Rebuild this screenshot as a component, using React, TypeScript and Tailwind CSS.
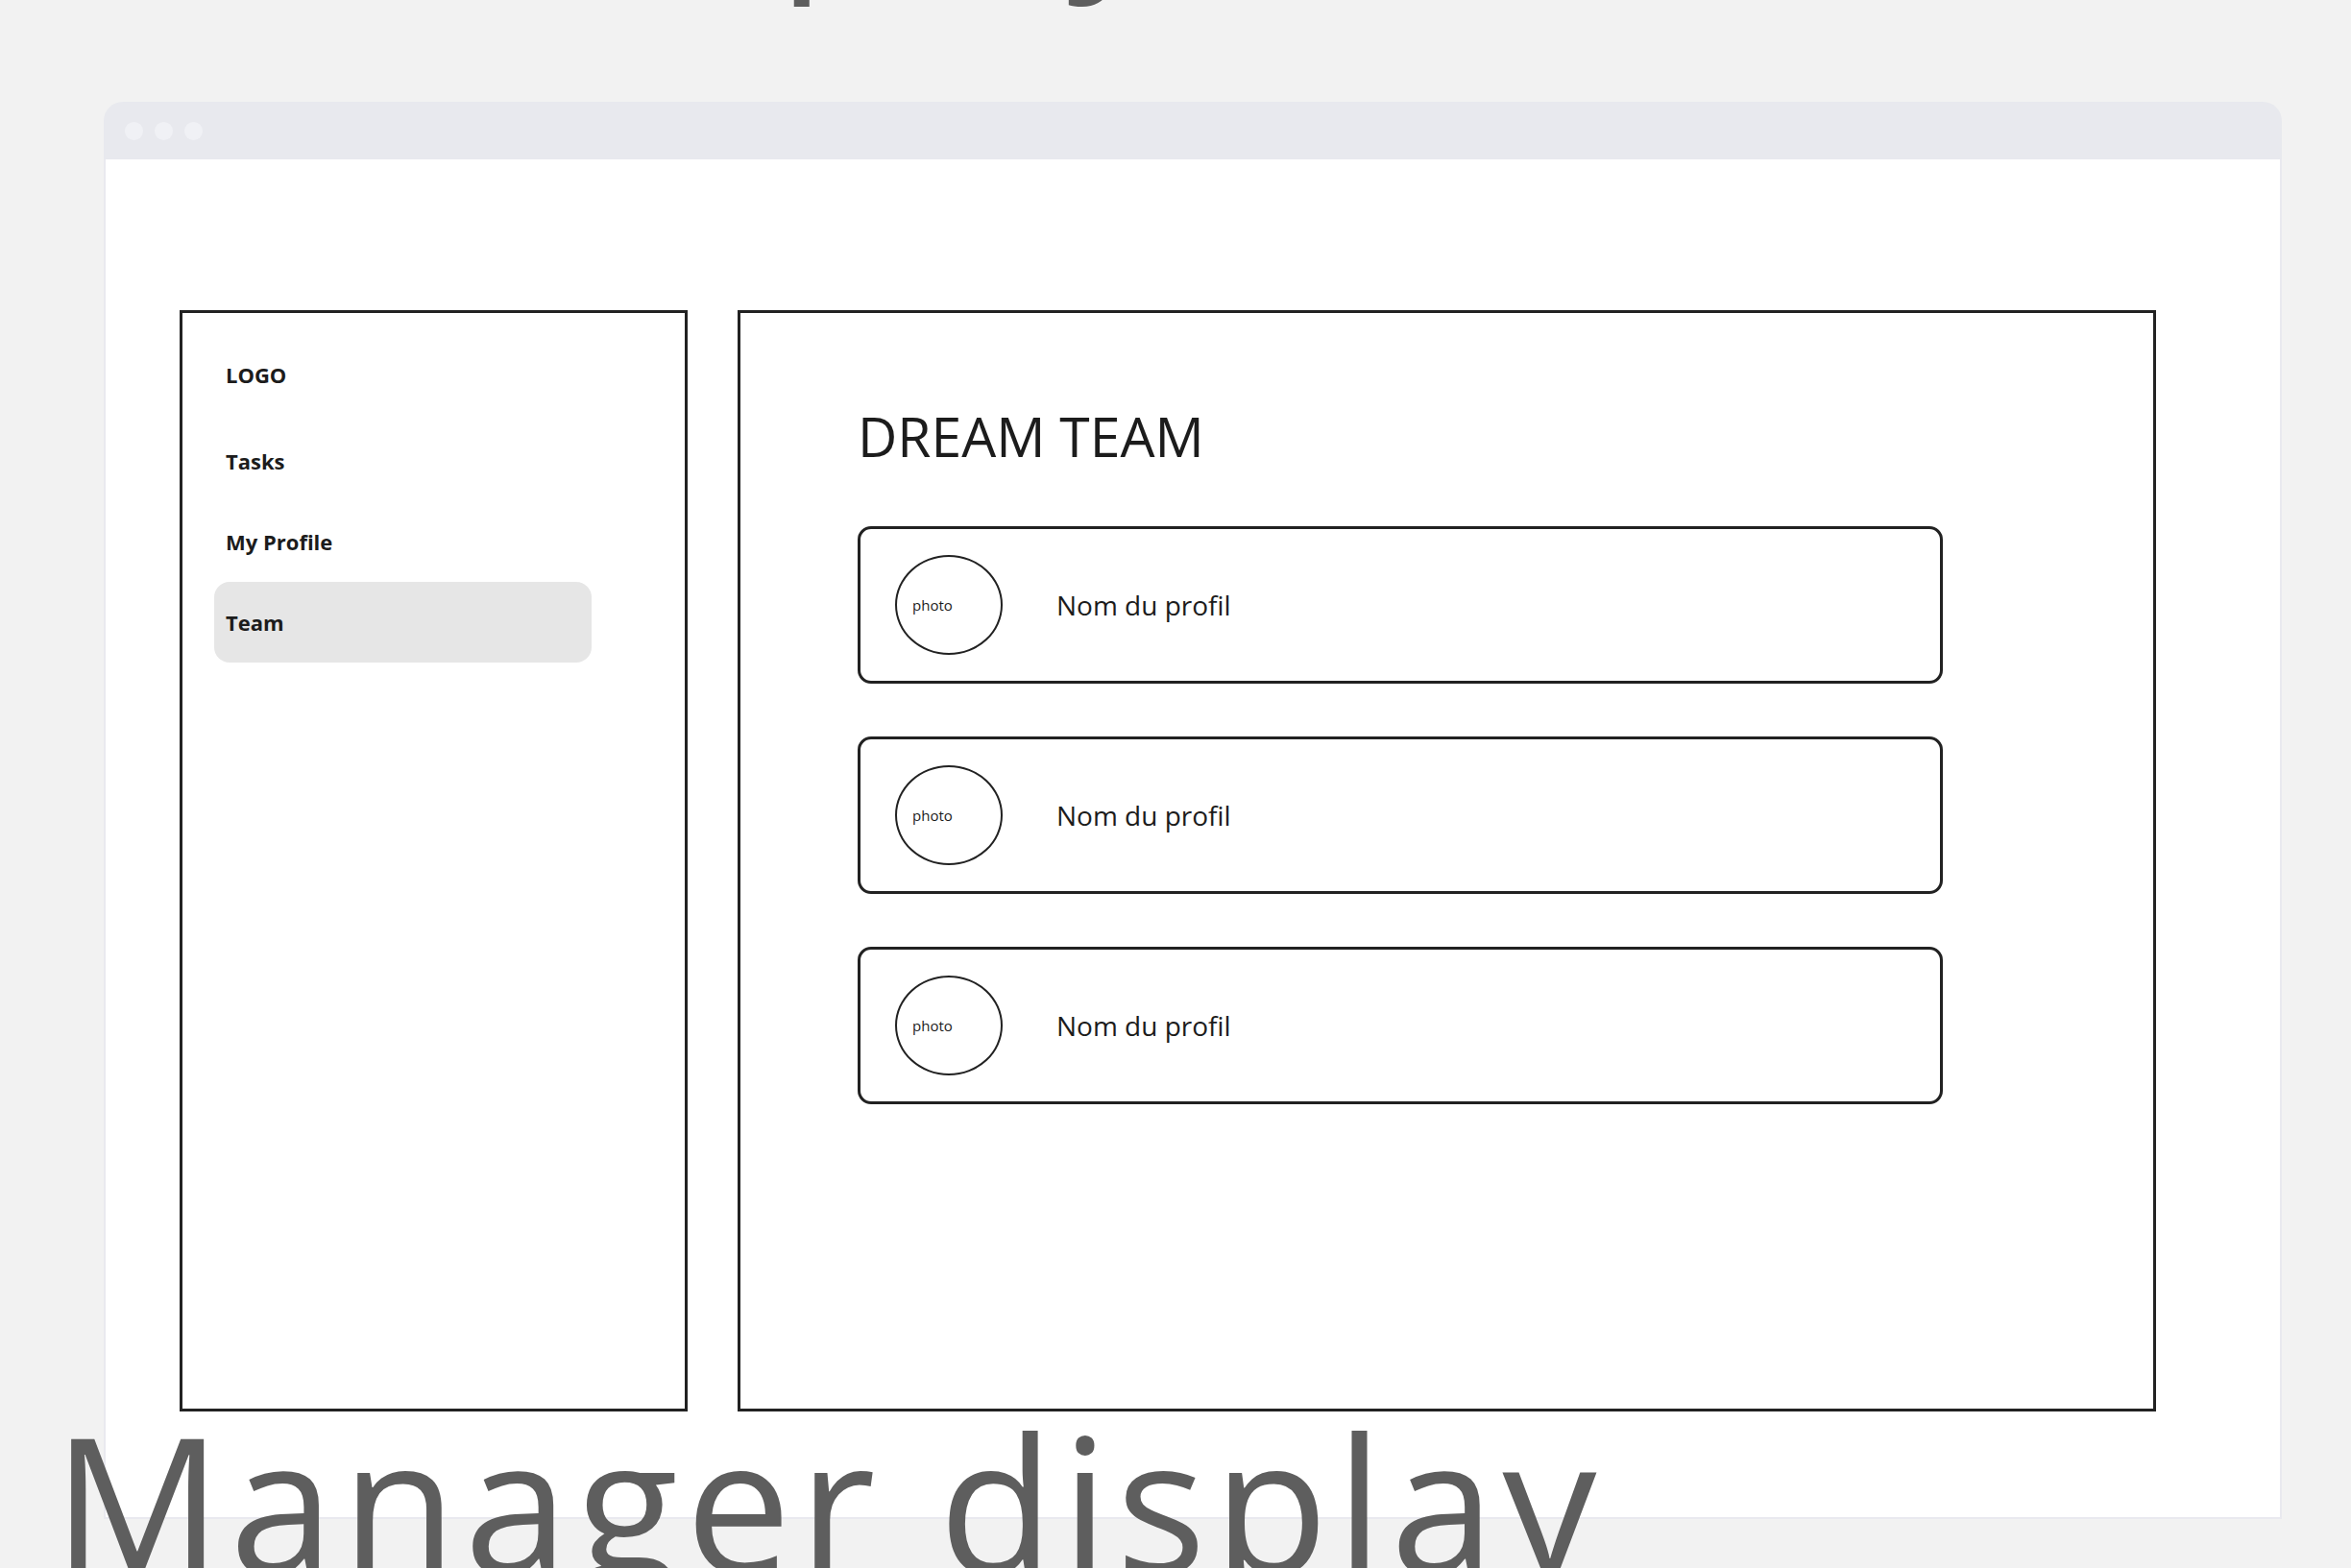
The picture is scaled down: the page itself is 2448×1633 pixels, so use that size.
import React from "react";

const navItems = [
  { id: 1, label: "Tasks", active: false },
  { id: 2, label: "My Profile", active: false },
  { id: 3, label: "Team", active: true },
];

const members = [1, 2, 3];

const ProfileCard = () => (
  <div className="flex items-center h-[164px] w-[1130px] border-[3px] border-[#222] rounded-[14px] pl-[36px]">
    <div className="flex items-center w-[112px] h-[104px] rounded-[50%] border-2 border-[#222] pl-[16px]">
      <span className="text-[15px] leading-none text-[#1c1c1c]">photo</span>
    </div>
    <span className="ml-[56px] text-[28px] leading-none text-[#1c1c1c]">Nom du profil</span>
  </div>
);

const App = () => {
  return (
    <div className="w-full h-[1633px] overflow-hidden bg-[#f2f2f2] font-['Open_Sans',sans-serif]">
      <h1 className="mt-[-214px] pl-[9px] text-[196px] leading-none tracking-[7.6px] font-normal text-[#5e5e5e] whitespace-nowrap">
        User display
      </h1>

      <div className="mt-[124px] ml-[108px] w-[2268px]">
        <div className="flex items-center gap-[12px] h-[60px] pl-[22px] bg-[#e8e9ee] rounded-t-[20px]">
          <span className="w-[19px] h-[19px] rounded-full bg-[#f0f1f5]" />
          <span className="w-[19px] h-[19px] rounded-full bg-[#f0f1f5]" />
          <span className="w-[19px] h-[19px] rounded-full bg-[#f0f1f5]" />
        </div>

        <div className="flex items-start gap-[52px] h-[1416px] pt-[157px] pl-[77px] bg-white border-x-2 border-b-2 border-[#e9e9ef]">
          <aside className="w-[529px] h-[1147px] border-[3px] border-[#222] pt-[22px] pl-[33px] text-[#1c1c1c]">
            <div className="flex items-center h-[84px] pl-[12px] text-[22px] font-bold">LOGO</div>
            <ul className="mt-[6px]">
              {navItems.map(({ id, label, active }) => (
                <li
                  key={id}
                  className={
                    active
                      ? "flex items-center h-[84px] w-[393px] pl-[12px] text-[22px] font-bold bg-[#e6e6e6] rounded-[16px]"
                      : "flex items-center h-[84px] w-[393px] pl-[12px] text-[22px] font-bold"
                  }
                >
                  {label}
                </li>
              ))}
            </ul>
          </aside>

          <main className="w-[1477px] h-[1147px] border-[3px] border-[#222] pt-[100px] pl-[122px]">
            <h2 className="text-[57px] leading-none font-normal text-[#1c1c1c]">DREAM TEAM</h2>
            <div className="flex flex-col gap-[55px] mt-[65px]">
              {members.map((m) => (
                <ProfileCard key={m} />
              ))}
            </div>
          </main>
        </div>
      </div>

      <h1 className="relative mt-[-117px] pl-[55px] text-[196px] leading-none tracking-[7.6px] font-normal text-[#5e5e5e] whitespace-nowrap">
        Manager display
      </h1>
    </div>
  );
};

export default App;
